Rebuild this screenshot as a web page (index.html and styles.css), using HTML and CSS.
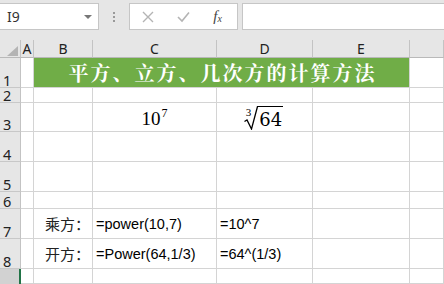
FILE: index.html
```html
<!DOCTYPE html>
<html lang="zh-CN">
<head>
    <meta charset="UTF-8">
    <meta name="viewport" content="width=device-width, initial-scale=1.0">
    <title>平方、立方、几次方的计算方法</title>
    <link rel="stylesheet" href="styles.css">
</head>
<body>

<div class="formula-bar">
    <div class="name-box">
        <span class="cell-ref">I9</span>
        <span class="drop"></span>
    </div>
    <div class="grip"><i></i><i></i><i></i></div>
    <div class="fx-buttons">
        <svg class="btn-icon" width="12" height="12" viewBox="0 0 12 12">
            <path d="M1 1 L11 11 M11 1 L1 11" stroke="#b4b4b4" stroke-width="1.4" fill="none"/>
        </svg>
        <svg class="btn-icon" width="13" height="12" viewBox="0 0 13 12">
            <path d="M1 6 L5 10 L12 1.5" stroke="#b4b4b4" stroke-width="1.6" fill="none"/>
        </svg>
        <span class="fx">f<sub>x</sub></span>
    </div>
    <div class="formula-input"></div>
</div>

<div class="sheet">
    <div class="row head">
        <div class="cell corner"><span class="tri"></span></div>
        <div class="cell col">A</div>
        <div class="cell col">B</div>
        <div class="cell col">C</div>
        <div class="cell col">D</div>
        <div class="cell col">E</div>
        <div class="cell col"></div>
    </div>

    <div class="row h30">
        <div class="cell rh">1</div>
        <div class="cell"></div>
        <div class="cell title">平方、立方、几次方的计算方法</div>
        <div class="cell"></div>
    </div>

    <div class="row h15">
        <div class="cell rh">2</div>
        <div class="cell"></div><div class="cell"></div><div class="cell"></div>
        <div class="cell"></div><div class="cell"></div><div class="cell"></div>
    </div>

    <div class="row h29">
        <div class="cell rh">3</div>
        <div class="cell"></div>
        <div class="cell"></div>
        <div class="cell center math"><span class="pow">10<sup>7</sup></span></div>
        <div class="cell center math">
            <span class="root">
                <span class="idx">3</span>
                <svg class="sign" width="14" height="24" viewBox="0 0 14 24">
                    <path d="M0.5 15.5 L3 14 L7.5 23 L13.5 0.5 L14 0.5" stroke="#000" stroke-width="1.3" fill="none"/>
                </svg>
                <span class="radicand">64</span>
            </span>
        </div>
        <div class="cell"></div>
        <div class="cell"></div>
    </div>

    <div class="row h30">
        <div class="cell rh">4</div>
        <div class="cell"></div><div class="cell"></div><div class="cell"></div>
        <div class="cell"></div><div class="cell"></div><div class="cell"></div>
    </div>

    <div class="row h30">
        <div class="cell rh">5</div>
        <div class="cell"></div><div class="cell"></div><div class="cell"></div>
        <div class="cell"></div><div class="cell"></div><div class="cell"></div>
    </div>

    <div class="row h17">
        <div class="cell rh">6</div>
        <div class="cell"></div><div class="cell"></div><div class="cell"></div>
        <div class="cell"></div><div class="cell"></div><div class="cell"></div>
    </div>

    <div class="row h30">
        <div class="cell rh">7</div>
        <div class="cell"></div>
        <div class="cell label">乘方：</div>
        <div class="cell text">=power(10,7)</div>
        <div class="cell text">=10^7</div>
        <div class="cell"></div>
        <div class="cell"></div>
    </div>

    <div class="row h30">
        <div class="cell rh">8</div>
        <div class="cell"></div>
        <div class="cell label">开方：</div>
        <div class="cell text">=Power(64,1/3)</div>
        <div class="cell text">=64^(1/3)</div>
        <div class="cell"></div>
        <div class="cell"></div>
    </div>

    <div class="row h15">
        <div class="cell rh selected"></div>
        <div class="cell"></div><div class="cell"></div><div class="cell"></div>
        <div class="cell"></div><div class="cell"></div><div class="cell"></div>
    </div>
</div>

</body>
</html>
```

FILE: styles.css
```css
body {
    margin: 0;
    padding: 0;
    width: 444px;
    height: 284px;
    overflow: hidden;
    background-color: #e6e6e6;
    font-family: "Liberation Sans", Arial, sans-serif;
    color: #000;
}

/* formula bar */
.formula-bar {
    display: flex;
    height: 40px;
    padding-top: 3px;
    box-sizing: border-box;
}
.name-box {
    width: 100px;
    height: 27px;
    margin-left: -1px;
    background-color: #fff;
    border: 1px solid #c6c6c6;
    box-sizing: border-box;
    display: flex;
    align-items: center;
    justify-content: space-between;
    padding: 0 6px 0 7px;
}
.cell-ref {
    font-family: "Noto Sans", sans-serif;
    font-size: 14px;
    color: #333;
}
.drop {
    width: 0;
    height: 0;
    border-left: 4px solid transparent;
    border-right: 4px solid transparent;
    border-top: 4px solid #777;
}
.grip {
    width: 30px;
    display: flex;
    flex-direction: column;
    align-items: center;
    padding-top: 9px;
    gap: 2px;
    box-sizing: border-box;
}
.grip i {
    width: 2px;
    height: 2px;
    background-color: #999;
}
.fx-buttons {
    width: 109px;
    height: 27px;
    background-color: #fff;
    border: 1px solid #c6c6c6;
    box-sizing: border-box;
    display: flex;
    align-items: center;
    justify-content: space-around;
}
.fx {
    width: 12px;
    font-family: "Liberation Serif", serif;
    font-style: italic;
    font-size: 15px;
    color: #444;
    line-height: 1;
}
.fx sub {
    font-size: 10px;
    vertical-align: -1px;
}
.formula-input {
    flex: 1;
    height: 27px;
    margin-left: 4px;
    margin-right: -1px;
    background-color: #fff;
    border: 1px solid #c6c6c6;
    box-sizing: border-box;
}

/* sheet grid */
.sheet {
    background-color: #fff;
}
.row {
    display: grid;
    grid-template-columns: 21px 13px 59px 124px 96px 97px 1fr;
}
.head { height: 18px; background-color: #e6e6e6; }
.h15 { height: 15px; }
.h17 { height: 17px; }
.h29 { height: 29px; }
.h30 { height: 30px; }

.cell {
    border-right: 1px solid #d4d4d4;
    border-bottom: 1px solid #d4d4d4;
    box-sizing: border-box;
    display: flex;
    align-items: center;
    overflow: hidden;
    white-space: nowrap;
}
.col {
    justify-content: center;
    background-color: #e6e6e6;
    border-right-color: #c3c3c3;
    border-bottom-color: #b9b9b9;
    font-family: "Noto Sans", sans-serif;
    font-size: 14px;
    color: #222;
}
.corner {
    background-color: #e6e6e6;
    border-right-color: #c3c3c3;
    border-bottom-color: #b9b9b9;
    justify-content: flex-end;
    align-items: flex-end;
}
.tri {
    width: 0;
    height: 0;
    border-left: 11px solid transparent;
    border-bottom: 10px solid #b4b4b4;
    margin: 0 2px 1px 0;
}
.rh {
    background-color: #e6e6e6;
    border-right-color: #c3c3c3;
    border-bottom-color: #c8c8c8;
    align-items: flex-end;
    overflow: visible;
    padding-left: 3px;
    font-family: "Noto Sans", sans-serif;
    font-size: 14.5px;
    line-height: 14px;
    color: #222;
}
.rh.selected {
    background-color: #d2d2d2;
    border-right: 2px solid #217346;
    border-bottom: none;
}

.title {
    grid-column: span 4;
    justify-content: center;
    background-color: #70ad47;
    color: #fff;
    font-family: "Noto Serif CJK SC", "Noto Sans CJK SC", serif;
    font-weight: bold;
    font-size: 20px;
    letter-spacing: 2px;
    padding-left: 2px;
}

.center { justify-content: center; }
.text {
    padding-left: 3px;
    font-size: 14.5px;
}
.label {
    justify-content: flex-end;
    padding-right: 2px;
    font-family: "Noto Sans CJK SC", sans-serif;
    font-size: 15px;
    color: #222;
}

.math {
    font-family: "Liberation Serif", serif;
    font-size: 19px;
}
.pow {
    margin-top: 3px;
}
.pow sup {
    font-size: 12px;
    vertical-align: 8px;
    line-height: 0;
    margin-left: 1px;
}
.root {
    display: inline-flex;
    align-items: flex-end;
    margin-top: 1px;
}
.idx {
    align-self: flex-start;
    font-size: 11px;
    line-height: 1;
    margin-top: 1px;
    margin-right: -7px;
}
.sign {
    display: block;
}
.radicand {
    font-family: "DejaVu Serif", serif;
    font-size: 18px;
    line-height: 21px;
    padding: 2px 1px 0 1px;
    border-top: 1px solid #000;
}
```
